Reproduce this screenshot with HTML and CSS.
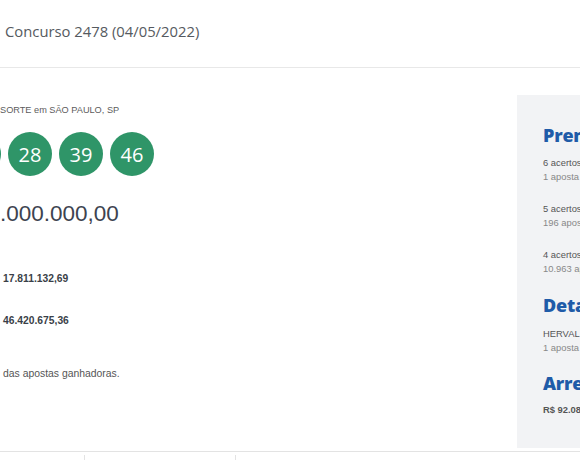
FILE: index.html
```html
<!DOCTYPE html>
<html lang="pt-BR">
<head>
<meta charset="utf-8">
<title>Mega-Sena Concurso 2478</title>
<link rel="stylesheet" href="styles.css">
</head>
<body>
<div class="page">
  <header class="top">
    <h1 class="title">Concurso 2478 (04/05/2022)</h1>
  </header>
  <main class="main">
    <section class="result">
      <p class="place">SORTE em SÃO PAULO, SP</p>
      <div class="balls">
        <span class="ball">17</span>
        <span class="ball">28</span>
        <span class="ball">39</span>
        <span class="ball">46</span>
      </div>
      <p class="prize">.000.000,00</p>
      <p class="value v1">17.811.132,69</p>
      <p class="value v2">46.420.675,36</p>
      <p class="note">das apostas ganhadoras.</p>
    </section>
    <aside class="side">
      <h2 class="side-h h1">Premiação</h2>
      <div class="tier">
        <p class="tier-a">6 acertos</p>
        <p class="tier-b">1 aposta ganhadora</p>
      </div>
      <div class="tier">
        <p class="tier-a">5 acertos</p>
        <p class="tier-b">196 apostas ganhadoras</p>
      </div>
      <div class="tier">
        <p class="tier-a">4 acertos</p>
        <p class="tier-b">10.963 apostas ganhadoras</p>
      </div>
      <h2 class="side-h h2">Detalhamento</h2>
      <div class="tier tier-d">
        <p class="tier-a">HERVAL D'OESTE/SC</p>
        <p class="tier-b">1 aposta</p>
      </div>
      <h2 class="side-h h3">Arrecadação total</h2>
      <p class="total">R$ 92.083.116,00</p>
    </aside>
  </main>
  <footer class="foot">
    <div class="cell c1"></div>
    <div class="cell c2"></div>
    <div class="cell c3"></div>
  </footer>
</div>
</body>
</html>
```
FILE: styles.css
```css
html, body {
  margin: 0;
  padding: 0;
  background: #ffffff;
}
.page {
  width: 580px;
  height: 460px;
  overflow: hidden;
  font-family: "Liberation Sans", Arial, sans-serif;
  color: #555;
}
p, h1, h2 { margin: 0; }

.top {
  height: 67px;
  border-bottom: 1px solid #e8e8e8;
  display: flex;
  align-items: center;
  padding-left: 5px;
  box-sizing: content-box;
}
.title {
  font-family: "Open Sans", sans-serif;
  font-weight: 400;
  font-size: 14.8px;
  color: #555a60;
  line-height: 20px;
  margin-top: -6px;
}

.main {
  display: flex;
  height: 383px;
}
.result {
  flex: 1;
  min-width: 0;
  padding-top: 35px;
}
.place {
  font-size: 9.2px;
  line-height: 14px;
  color: #5c5c5c;
  white-space: nowrap;
}
.balls {
  display: flex;
  gap: 7px;
  margin-top: 15px;
  margin-left: -43px;
}
.ball {
  width: 44px;
  height: 44px;
  border-radius: 50%;
  background: #2f9568;
  color: #fff;
  font-family: "Open Sans", sans-serif;
  font-size: 20px;
  display: flex;
  align-items: center;
  justify-content: center;
  flex: none;
}
.prize {
  margin-top: 25px;
  font-family: "Liberation Sans", Arial, sans-serif;
  font-size: 22.5px;
  line-height: 26px;
  color: #3d4350;
}
.value {
  font-size: 10.3px;
  line-height: 14px;
  font-weight: bold;
  color: #3a3f48;
  padding-left: 3px;
}
.v1 { margin-top: 45px; }
.v2 { margin-top: 28px; }
.note {
  margin-top: 39px;
  font-size: 10.4px;
  line-height: 14px;
  color: #555;
  padding-left: 3px;
}

.side {
  width: 37px;
  margin-top: 27px;
  height: 324px;
  background: #f2f3f5;
  padding: 29px 0 0 26px;
  overflow: hidden;
  white-space: nowrap;
  flex: none;
}
.side-h {
  font-family: "Open Sans", sans-serif;
  font-weight: 800;
  font-size: 18px;
  line-height: 22px;
  color: #1f5ba8;
  letter-spacing: -0.2px;
}
.tier { margin-top: 18px; }
.h1 + .tier { margin-top: 10px; }
.tier-d { margin-top: 11px; }
.tier-a {
  font-size: 9.4px;
  line-height: 14px;
  color: #555;
}
.tier-b {
  font-size: 9.4px;
  line-height: 14px;
  color: #888;
}
.h2 { margin-top: 18px; }
.h3 { margin-top: 17px; }
.total {
  margin-top: 9px;
  font-size: 9.4px;
  line-height: 14px;
  font-weight: bold;
  color: #555;
}

.foot {
  border-top: 1px solid #e3e3e3;
  margin-top: 0;
  padding-top: 3px;
  display: flex;
  height: 8px;
}
.cell { height: 100%; }
.c1 { width: 84px; }
.c2 { width: 150px; border-left: 1px solid #e3e3e3; }
.c3 { flex: 1; border-left: 1px solid #e3e3e3; }
```
